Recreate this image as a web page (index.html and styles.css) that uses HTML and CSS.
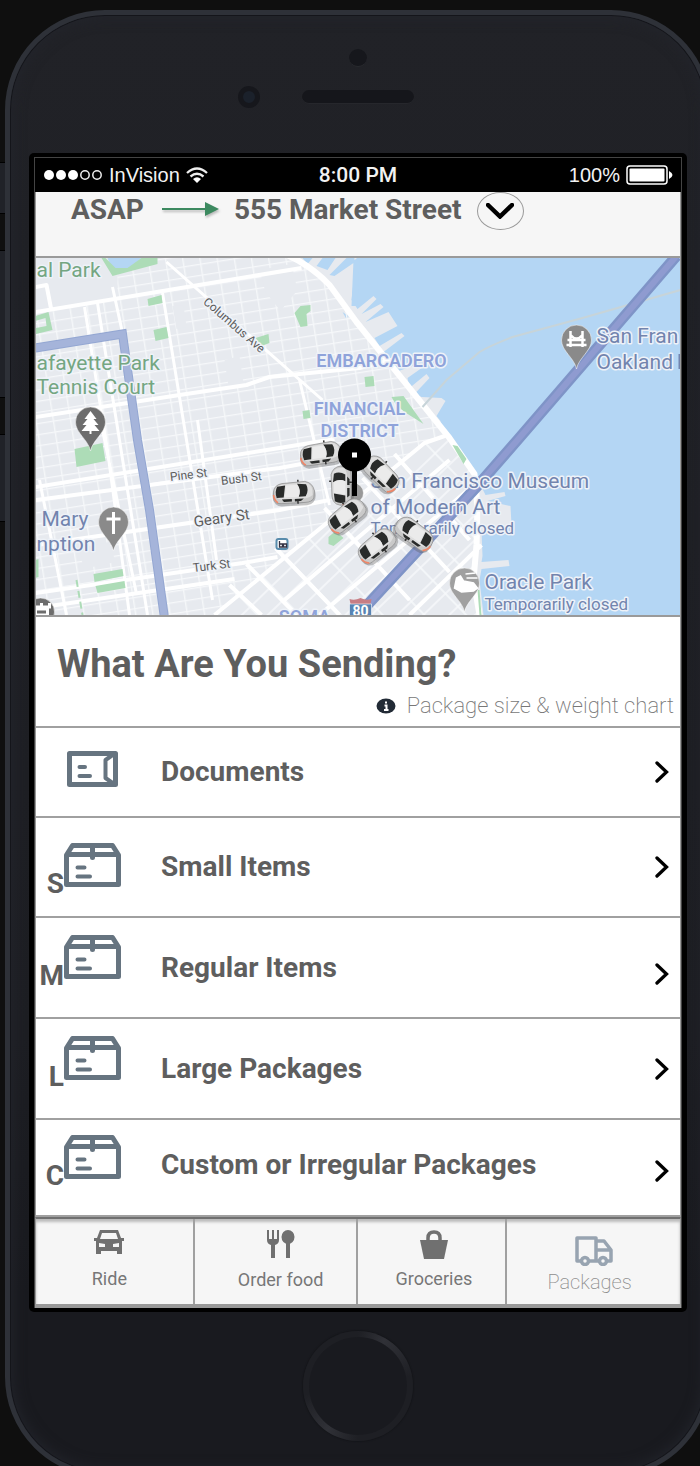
FILE: index.html
```html
<!DOCTYPE html>
<html lang="en">
<head>
<meta charset="utf-8">
<meta name="viewport" content="width=device-width, initial-scale=1">
<title>What Are You Sending?</title>
<link rel="stylesheet" href="styles.css">
</head>
<body>
<svg class="defs" aria-hidden="true">
  <defs>
    <symbol id="box" viewBox="0 0 57 44">
      <g fill="none" stroke="#667480" stroke-width="5" stroke-linejoin="round" stroke-linecap="round">
        <path d="M2.500 12 8.500 2.500H48.500L54.500 12V41.500H2.500ZM3 11.500H54M28.500 3V14.500" /><path d="M13.500 24.500H20.500M13.500 33.500H26" stroke-width="4"/>
      </g>
    </symbol>
    <symbol id="chevron" viewBox="0 0 14 22"><path d="M2 2 11.500 11 2 20" fill="none" stroke="#000" stroke-width="3.300" stroke-linecap="round"/></symbol>
    <symbol id="teardrop" viewBox="-16 -16 32 46" overflow="visible"><path d="M0 29C-2 18-15 11-15 0A15 15 0 1 1 15 0C15 11 2 18 0 29Z"/></symbol>
  </defs>
</svg>
<div class="stage">
  <div class="side-keys" aria-hidden="true"><i class="key key-mute"></i><i class="key key-volume"></i><i class="key key-down"></i></div>
  <div class="phone">
    <div class="forehead" aria-hidden="true">
      <i class="sensor"></i>
      <div class="ear"><i class="camera"></i><i class="speaker"></i></div>
    </div>
    <div class="bezel">
      <div class="screen">
        <div class="status">
          <div class="carrier">
            <svg width="60" height="12" viewBox="0 0 60 12"><g fill="#fff"><circle cx="6" cy="6" r="5"/><circle cx="18" cy="6" r="5"/><circle cx="30" cy="6" r="5"/></g><g fill="none" stroke="#eee" stroke-width="1.500"><circle cx="42" cy="6" r="4.200"/><circle cx="54" cy="6" r="4.200"/></g></svg>
            <span>InVision</span>
            <svg width="22" height="16" viewBox="0 0 22 16"><g fill="none" stroke="#eee" stroke-width="2.300"><path d="M1 6Q11-3 21 6M4.500 9.500Q11 4 17.500 9.500"/></g><path d="M7 12Q11 8.500 15 12L11 16Z" fill="#fff"/></svg>
          </div>
          <strong class="clock">8:00 PM</strong>
          <div class="power">
            <span>100%</span>
            <svg width="47" height="20" viewBox="0 0 47 20"><rect x="1" y="1" width="40" height="18" rx="3" fill="none" stroke="#fff" stroke-width="1.500"/><rect x="3.500" y="3.500" width="35" height="13" rx="1" fill="#fff"/><path d="M43 6Q50 10 43 14Z" fill="#fff"/></svg>
          </div>
        </div>

        <header class="trip">
          <span>ASAP</span>
          <svg class="arrow" width="58" height="20" viewBox="0 0 58 20"><path d="M0 10H44" stroke="#3d8a60" stroke-width="2"/><path d="M43 3 57 10 43 17Z" fill="#3d8a60"/></svg>
          <span>555 Market Street</span>
          <button class="more" type="button" aria-label="Change destination"><svg width="28" height="16" viewBox="0 0 28 16"><path d="M2 2 14 13.500 26 2" fill="none" stroke="#000" stroke-width="4.500" stroke-linecap="round"/></svg></button>
        </header>

        <svg class="map" viewBox="36 258 645 357" preserveAspectRatio="xMidYMid slice" role="img" aria-label="Map of San Francisco">
          <defs>
            <pattern id="north" width="17" height="11" patternUnits="userSpaceOnUse" patternTransform="translate(36 312) rotate(-9)"><path d="M0 .7H17M.7 0V11" stroke="#f6f8fa" stroke-width="1.300"/></pattern>
            <pattern id="soma" width="30" height="18" patternUnits="userSpaceOnUse" patternTransform="translate(215 615) rotate(-44)"><path d="M0 1H30M1 0V18" stroke="#f7f9fb" stroke-width="1.600"/></pattern>
            <g id="car">
              <rect x="-21" y="-7" width="43" height="20" rx="9" fill="#555" opacity=".35"/>
              <path d="M-20-2Q-19-9-11-10L12-11Q20-9 21-1L20 6Q18 10 11 10H-13Q-20 10-20 4Z" fill="#c9c9c9" stroke="#8d8d8d" stroke-width=".7"/>
              <path d="M-18-4Q-16-9-10-9L12-10Q19-8 19-2V3Q15 6 9 6H-12Q-18 5-18 0Z" fill="#dfdfdf"/>
              <path d="M-16-7-8-8-10 4-17 4Q-19-2-16-7ZM4-9 13-8Q16-2 12 4L5 4Q8-3 4-9ZM-12 6H-2V8.500H-10ZM1 6H10L7 8.500H1Z" fill="#292b2a"/>
              <path d="M-7-8H4Q8-2 5 4H-9Z" fill="#ebebeb"/>
              <path d="M-20 1Q-20 6-16 9" fill="none" stroke="#ef8566" stroke-width="1.600"/>
              <path d="M5-11V-13M4 8V11" stroke="#333" stroke-width="1.500"/>
            </g>
            <path id="land" d="M36 258H357L352 300 358 309 374 296 377 299 362 314 381 304 384 307 366 322 389 312 398 326 375 338 380 346 402 333 405 336 384 352 399 371 422 363 425 366 408 378 410 388 427 374 430 378 415 394 422 397 442 398 446 401 437 416 441 421V430L457 444 471 465 486 495 505 492 506 496 488 501 511 506 512 525 482 531 483 556 482 562 509 560 510 566 482 569 480 580 484 615H36Z"/>
            <clipPath id="northClip"><path d="M36 258H293L330 285 450 435 425 443 215 615H36Z"/></clipPath>
            <clipPath id="somaClip"><path d="M425 443 450 433 477 480 480 545 475 580 480 615H215Z"/></clipPath>
          </defs>
          <path d="M36 258H681V615H36Z" fill="#b4d6f4"/>
          <use href="#land" fill="#e7eaef"/>
          <g fill="#b4d6f4"><path d="M303 258H313L308 264ZM317 266 323 258H336L328 270ZM330 275 347 258H355L354 263 335 276ZM352 306 354 260 360 258 358 306ZM343 312 349 316 347 319Z"/></g>
          <g clip-path="url(#northClip)"><path d="M118 258H681V615H36V312L118 296Z" fill="url(#north)"/></g>
          <g clip-path="url(#somaClip)"><path d="M200 430H500V615H200Z" fill="url(#soma)"/></g>
          <g fill="#e7eaef"><path d="M260 270 292 264 298 290 281 311 266 292ZM225 360 240 356 244 384 229 386ZM173 306 184 305 187 327 177 329ZM80 548 110 542 116 562 84 569Z"/></g>
          <g fill="none" stroke="#fff" stroke-linejoin="round" stroke-width="4">
            <path d="M36 287 47 285 52 311M30 313 302 268M36 417 180 395 247 385 270 377 360 368 400 358M36 487 280 448 335 439M36 500 280 468 340 457M36 545 280 510 330 500M36 593 243 563 278 557M36 608 235 579"/>
            <path d="M113 287 123 333M85 307 108 450 130 615M98 303 148 615M163 293 187 440 213 600M167 262 323 400M40 480 67 615M103 430 137 594M198 420 217 560M300 380 330 505" stroke-width="3"/>
            <path d="M215 615 425 443 448 435M230 585 262 615M247 564 297 615M276 548 340 615M325 508 410 600M363 478 450 572M395 454 470 540M285 600 450 460M410 615 482 545M320 615 478 482"/>
            <path d="M285 254Q310 264 330 285L357 322 450 438 475 474Q479 500 477 545L474 580 480 615" stroke-width="6"/>
          </g>
          <g fill="#addcb7"><path d="M148 299 162 295 163 303 149 306ZM154 330 167 327 169 338 156 341ZM256 338 269 334 270 343 262 346ZM295 313 301 306 311 305 311 311 307 314 308 326 301 327ZM303 411 310 410 311 418 304 419ZM365 377 374 376 375 386 366 387ZM392 397 404 396 424 424 405 412 396 404ZM75 449 103 443 106 461 77 467ZM94 574 123 569 124 576 95 582ZM96 586 125 581 126 588 98 593ZM36 560 39 559 39 577 36 578ZM329 537 336 531 344 538 334 546 329 544ZM453 445 458 446 467 459 464 464ZM478 590 480 590 482 615H480Z"/><path d="M36 316 49 312 53 330 36 334V328L47 326 46 318 36 321Z"/></g>
          <path d="M77 580 83 615" stroke="#addcb7" stroke-width="2" stroke-dasharray="7 4"/>
          <path d="M108 258H142L129 270 113 270Z" fill="#b4d6f4"/>
          <path d="M102 258H106L116 268 128 268 142 258H158V264L113 276Z" fill="#addcb7"/>
          <path d="M681 290 583 318 513 337Q490 346 480 352L447 380 423 407" fill="none" stroke="#c7d4d9" stroke-width="2"/>
          <path d="M36 348 123 334 138 440 150 510 165 618" fill="none" stroke="#94a7d2" stroke-width="9"/>
          <path d="M36 348 123 334 138 440 150 510 165 618" fill="none" stroke="#a5b4da" stroke-width="7"/>
          <path d="M677 256 518 440 476 488 352 622" fill="none" stroke="#7f94c7" stroke-width="11"/>
          <path d="M677 256 518 440 476 488 352 622" fill="none" stroke="#8f9bd0" stroke-width="6"/>

          <g class="places">
            <g class="park"><text x="37" y="277">al Park</text><text x="37" y="370">afayette Park</text><text x="37" y="394">Tennis Court</text></g>
            <g class="poi"><text x="42" y="526">Mary</text><text x="37" y="551">nption</text><text x="597" y="343">San Fran</text><text x="597" y="369">Oakland</text><text x="371" y="488">San Francisco Museum</text><text x="371" y="514">of Modern Art</text><text x="485" y="589">Oracle Park</text></g>
            <g class="note"><text x="371" y="534">Temporarily closed</text><text x="485" y="610">Temporarily closed</text></g>
            <g class="district"><text x="382" y="367">EMBARCADERO</text><text x="360" y="415">FINANCIAL</text><text x="360" y="437">DISTRICT</text><text x="305" y="623">SOMA</text></g>
            <g class="street"><text transform="translate(203 303) rotate(41)">Columbus Ave</text><text transform="translate(171 481) rotate(-7)">Pine St</text><text transform="translate(222 485) rotate(-7)">Bush St</text><text class="avenue" transform="translate(195 527) rotate(-8)">Geary St</text><text transform="translate(194 572) rotate(-7)">Turk St</text></g>
          </g>

          <path d="M680 354V369" stroke="#7284ae" stroke-width="2"/>
          <g stroke="#fff" stroke-opacity=".5">
            <use href="#teardrop" x="75" y="406" width="32" height="46" fill="#6d6d6d"/>
            <use href="#teardrop" x="98" y="506" width="32" height="46" fill="#8a8a8a"/>
            <use href="#teardrop" x="561" y="324" width="32" height="46" fill="#8a8a8a"/>
            <use href="#teardrop" x="449" y="567" width="32" height="46" fill="#a0a0a0"/>
            <circle cx="41" cy="612" r="14" fill="#6d6d6d"/>
            <circle cx="354" cy="493" r="10" fill="#999"/>
          </g>
          <path d="M91 411 97 419H94L99 425H95L100 431H92V434H90V431H82L87 425H83L88 419H85Z" fill="#fff"/>
          <path d="M114 512V534M107 519H121" stroke="#fff" stroke-width="3"/>
          <path d="M571 331V347M583 331V347M568 340H586M567 345H587M571 335Q577 342 583 335" fill="none" stroke="#fff" stroke-width="2.500"/>
          <path d="M34 603V607H50V603M42 603V607M36 609H48V615H36Z" fill="none" stroke="#fff" stroke-width="3"/>
          <path d="M455 588 457 578 461 576 464 581 474 583 478 588 474 591 462 592ZM466 574 476 573M467 578 478 578" fill="#fff" stroke="#fff" stroke-width="1.500"/>
          <rect x="277" y="539" width="11" height="10" rx="2" fill="#fff" stroke="#598cac" stroke-width="2"/><path d="M280 541V547H283V544H280M284 544H287V547H284Z" fill="none" stroke="#334" stroke-width="1.300"/>
          <path d="M350 599Q355 601 361 598Q367 601 372 599L371 604H351Z" fill="#c77e85"/><path d="M350 604H372V620H350Z" fill="#5783b3" stroke="#fff" stroke-width=".6"/><text class="shield" x="361" y="616">80</text>

          <use href="#car" transform="translate(321 454) rotate(-8)"/>
          <use href="#car" transform="translate(294 493) rotate(-3)"/>
          <use href="#car" transform="translate(342 486) rotate(-90) scale(.95)"/>
          <use href="#car" transform="translate(382 474) rotate(44) scale(-1 1)"/>
          <use href="#car" transform="translate(347 516) rotate(-38)"/>
          <use href="#car" transform="translate(377 546) rotate(-38)"/>
          <use href="#car" transform="translate(415 534) rotate(35) scale(-1 1)"/>
          <path d="M355 468V496" stroke="#000" stroke-width="5"/><circle cx="355" cy="455" r="16.500"/><path d="M352.500 452.500H357.500V457.500H352.500Z" fill="#fff"/>
        </svg>

        <main>
          <section class="intro">
            <h1>What Are You Sending?</h1>
            <a class="chart" href="#chart"><svg width="20" height="16" viewBox="0 0 20 16"><ellipse cx="10" cy="8" rx="9.500" ry="7.500" fill="#222b36"/><path d="M10 3.500V5.500M8.500 7.500H10.500V12M8 12H12.500" fill="none" stroke="#fff" stroke-width="2"/></svg><span>Package size &amp; weight chart</span></a>
          </section>
          <nav class="sizes" aria-label="Package type">
            <a class="size size-documents" href="#documents"><span class="art"><svg width="51" height="36" viewBox="0 0 51 36"><g fill="none" stroke="#667480" stroke-width="5" stroke-linejoin="round" stroke-linecap="round"><path d="M2.500 2.500H48.500V33.500H2.500Z"/><path d="M47 3 38.500 9V27L47 33M12.500 16H18M12.500 25H23" stroke-width="4"/></g></svg></span><span class="name">Documents</span><svg class="go"><use href="#chevron"/></svg></a>
            <a class="size size-small" href="#small"><span class="art"><b>S</b><svg width="57" height="44"><use href="#box"/></svg></span><span class="name">Small Items</span><svg class="go"><use href="#chevron"/></svg></a>
            <a class="size low" href="#regular"><span class="art"><b>M</b><svg width="57" height="44"><use href="#box"/></svg></span><span class="name">Regular Items</span><svg class="go"><use href="#chevron"/></svg></a>
            <a class="size" href="#large"><span class="art"><b>L</b><svg width="57" height="44"><use href="#box"/></svg></span><span class="name">Large Packages</span><svg class="go"><use href="#chevron"/></svg></a>
            <a class="size size-custom low" href="#custom"><span class="art"><b>C</b><svg width="57" height="44"><use href="#box"/></svg></span><span class="name">Custom or Irregular Packages</span><svg class="go"><use href="#chevron"/></svg></a>
          </nav>
        </main>

        <nav class="tabs" aria-label="Services">
          <a class="ride" href="#ride"><svg width="30" height="24" viewBox="0 0 30 24" fill="#707070"><path fill-rule="evenodd" d="M6 0H24L27 8H30V11H28V24H23V21H7V24H2V11H0V8H3ZM8 3 6 9H24L22 3ZM5 13V17H11V14ZM25 13 19 14V17H25Z"/></svg><span>Ride</span></a>
          <a class="food" href="#food"><svg width="30" height="28" viewBox="0 0 30 28" fill="#707070"><path d="M1 0H3V9H6V0H8V9H11V0H13V10Q13 14 9 15V28H5V15Q1 14 1 10Z"/><ellipse cx="22" cy="7" rx="6.500" ry="7"/><path d="M20 12H24V28H20Z"/></svg><span>Order food</span></a>
          <a class="groceries" href="#groceries"><svg width="28" height="29" viewBox="0 0 28 29"><path d="M0 10H28L24 29H4Z" fill="#707070"/><path d="M8 12V8Q8 2 14 2T20 8V12" fill="none" stroke="#707070" stroke-width="3.500"/></svg><span>Groceries</span></a>
          <a class="active" href="#packages" aria-current="page"><svg width="38" height="30" viewBox="0 0 38 30"><g fill="none" stroke="#98a4b1" stroke-width="3.500" stroke-linejoin="round"><path d="M6 25H2V2H21V25H14M21 5H29L36 14V25H32M24 25H21M22 14H36"/><circle cx="10" cy="25" r="3.500"/><circle cx="28" cy="25" r="3.500"/></g></svg><span>Packages</span></a>
        </nav>
      </div>
    </div>
    <div class="chin"><button class="home" type="button" aria-label="Home"></button></div>
  </div>
</div>
</body>
</html>
```
FILE: styles.css
```css
* { box-sizing: border-box; }
html { background: #0f0f0f; }
body { margin: 0; overflow: hidden; font-family: Roboto, "Liberation Sans", sans-serif; color: #5e5e5e; }
a { color: inherit; text-decoration: none; }
svg { display: block; flex: none; }
.defs { position: absolute; width: 0; height: 0; }

.stage { display: flex; height: 100vh; overflow: hidden; }
.side-keys { width: 5px; flex: none; display: flex; flex-direction: column; padding-top: 162px; gap: 36px; }
.key { background: #202228; border-top: 1px solid #000; border-bottom: 1px solid #000; }
.key-mute { height: 52px; }
.key-volume { height: 148px; }
.key-down { height: 88px; }

.phone {
  flex: 1; align-self: flex-start; margin: 10px -11px 0 0; padding: 0 19px;
  border: 5px solid #2e3138; border-radius: 100px;
  background: linear-gradient(#212227, #1d1e23 70%, #191a1f 88%);
  box-shadow: inset 0 0 0 1px #14151a, inset 0 0 14px 2px #23252c;
}
.forehead { height: 138px; padding-top: 34px; display: flex; flex-direction: column; align-items: center; }
.sensor { width: 18px; height: 18px; border-radius: 50%; background: #16171c; border-bottom: 1px solid #2a2b30; }
.ear { width: 100%; margin-top: 19px; display: grid; grid-template-columns: 1fr 112px 1fr; align-items: center; }
.camera { justify-self: end; margin-right: 42px; width: 22px; height: 22px; border-radius: 50%; border: 5px solid #16171c; background: #1b212b; }
.speaker { grid-column: 2; height: 14px; border-radius: 7px; background: #15161b; border-bottom: 1px solid #26272c; }

.bezel { background: #000; padding: 4px 5px; border-radius: 5px; }
.screen { border: 1px solid #444; border-width: 1px 1px 0; background: #fff; }
.status { height: 34px; padding: 0 8px; background: #000; color: #f2f2f2; display: grid; grid-template-columns: 1fr auto 1fr; align-items: center; font: 20px/24px "Liberation Sans", sans-serif; }
.carrier, .power { display: flex; align-items: center; gap: 6px; }
.power { justify-content: flex-end; }
.clock { font: 500 21px/24px Roboto, sans-serif; }

.trip { height: 66px; padding-left: 35px; background: #f6f6f6; border-bottom: 2px solid #9a9a9a; display: flex; align-items: flex-start; font-size: 28px; line-height: 35px; font-weight: 700; white-space: nowrap; }
.arrow { margin: 7px 14px 0 18px; filter: drop-shadow(1px 2px 1px #bbb); }
.more { width: 47px; height: 38px; margin-left: 15px; padding: 0; border: 1px solid #999; border-radius: 50%; background: none; display: grid; place-items: center; }
.trip, .map, main, .tabs { border-left: 1px solid #999; border-right: 1px solid #999; }

.map { width: 100%; height: 359px; border-bottom: 2px solid #9a9a9a; }
.places text { stroke: #eef2f8; stroke-width: 3px; stroke-linejoin: round; paint-order: stroke; }
.park { fill: #74a682; font-size: 21px; }
.poi { fill: #7284ae; font-size: 21px; }
.places .poi { font-size: 21px; }
.note { fill: #7284ae; font-size: 17px; }
.district { fill: #8fa3da; font-size: 18px; font-weight: 600; text-anchor: middle; }
.street { fill: #5c5c5c; font-size: 12px; }
.avenue { font-size: 15px; }
.shield { fill: #fff; font-size: 14px; font-weight: 700; text-anchor: middle; }

.intro { height: 111px; padding: 24px 6px 0 21px; border-bottom: 2px solid #a0a0a0; }
h1 { margin: 0; font-size: 38px; line-height: 46px; font-weight: 700; }
.chart { display: flex; align-items: center; justify-content: flex-end; gap: 11px; margin-top: 5px; font-size: 22px; line-height: 28px; font-weight: 200; color: #777; }

.size { min-height: 101px; padding-right: 11px; border-bottom: 2px solid #a0a0a0; display: grid; grid-template-columns: 85px 1fr auto; align-items: center; column-gap: 40px; }
.size-documents { min-height: 90px; }
.size-small { min-height: 100px; }
.size-custom { min-height: 97px; padding-bottom: 6px; }
.art { align-self: start; display: flex; align-items: flex-end; justify-content: flex-end; padding-top: 17px; }
.size-small .art { padding-top: 25px; }
.size-documents .art { padding: 23px 3px 0 0; }
.size-custom .art { padding-top: 15px; }
.art svg { margin-bottom: 12px; }
.art b { font-size: 28px; line-height: 30px; font-weight: 700; }
.name { font-size: 28px; line-height: 34px; font-weight: 700; }
.go { width: 14px; height: 22px; }
.low .go { margin-top: 12px; }

.tabs { height: 91px; border-top: 2px solid #707070; border-bottom: 4px solid #999; background: #f6f6f6; box-shadow: inset 0 3px 3px #bbb; display: grid; grid-template-columns: 159fr 164fr 149fr 173fr; }
.tabs a { display: flex; flex-direction: column; align-items: center; padding-top: 11px; border-right: 2px solid #a0a0a0; font-size: 18px; line-height: 22px; color: #777; }
.tabs .ride { gap: 14px; padding-right: 10px; }
.tabs .food { gap: 11px; padding-left: 10px; }
.tabs .groceries { gap: 9px; padding-left: 4px; }
.tabs .active { border: 0; padding: 17px 8px 0 0; gap: 4px; font-size: 20px; line-height: 24px; font-weight: 200; color: #8d8d8d; }
.active svg { margin-left: 8px; }

.chin { height: 160px; padding-top: 19px; display: flex; justify-content: center; align-items: flex-start; }
.home { width: 110px; height: 110px; padding: 0; border-radius: 50%; border: 6px solid transparent; background: linear-gradient(#191a1f, #191a1f) padding-box, conic-gradient(#1e1f24, #303137 30deg, #1e1f24 80deg, #1e1f24 180deg, #303137 215deg, #1e1f24 260deg) border-box; box-shadow: 0 0 1px 1px #15161a; }
```
